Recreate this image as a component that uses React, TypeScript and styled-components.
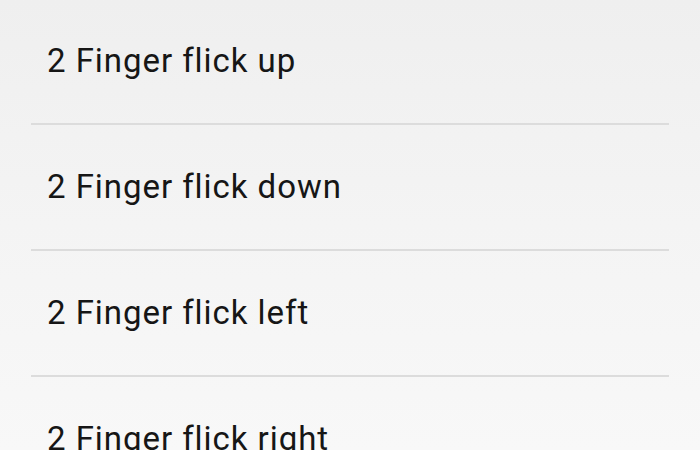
import React from 'react';
import styled, { createGlobalStyle } from 'styled-components';

const GlobalStyle = createGlobalStyle`
  html, body {
    margin: 0;
    padding: 0;
    height: 100%;
    overflow: hidden;
  }
  body {
    background: linear-gradient(to bottom, #efefef 0%, #f4f4f4 50%, #f8f8f8 100%);
    font-family: Roboto, "Noto Sans", sans-serif;
  }
`;

const List = styled.ul`
  list-style: none;
  margin: 0;
  padding: 0 31px;
  width: 700px;
  height: 450px;
  box-sizing: border-box;
  overflow: hidden;
`;

const Item = styled.li<{ $first?: boolean }>`
  display: flex;
  align-items: center;
  height: ${(p) => (p.$first ? '121px' : '122px')};
  padding: 0 0 2px 16px;
  border-bottom: 2px solid #dcdcdc;
  color: #161616;
  font-size: 33px;
  letter-spacing: 0.95px;
  font-variant-ligatures: none;
`;

const gestures = ['up', 'down', 'left', 'right'];

const App: React.FC = () => {
  return (
    <>
      <GlobalStyle />
      <List>
        {gestures.map((g, i) => (
          <Item key={g} $first={i === 0}>
            2 Finger flick {g}
          </Item>
        ))}
      </List>
    </>
  );
};

export default App;
